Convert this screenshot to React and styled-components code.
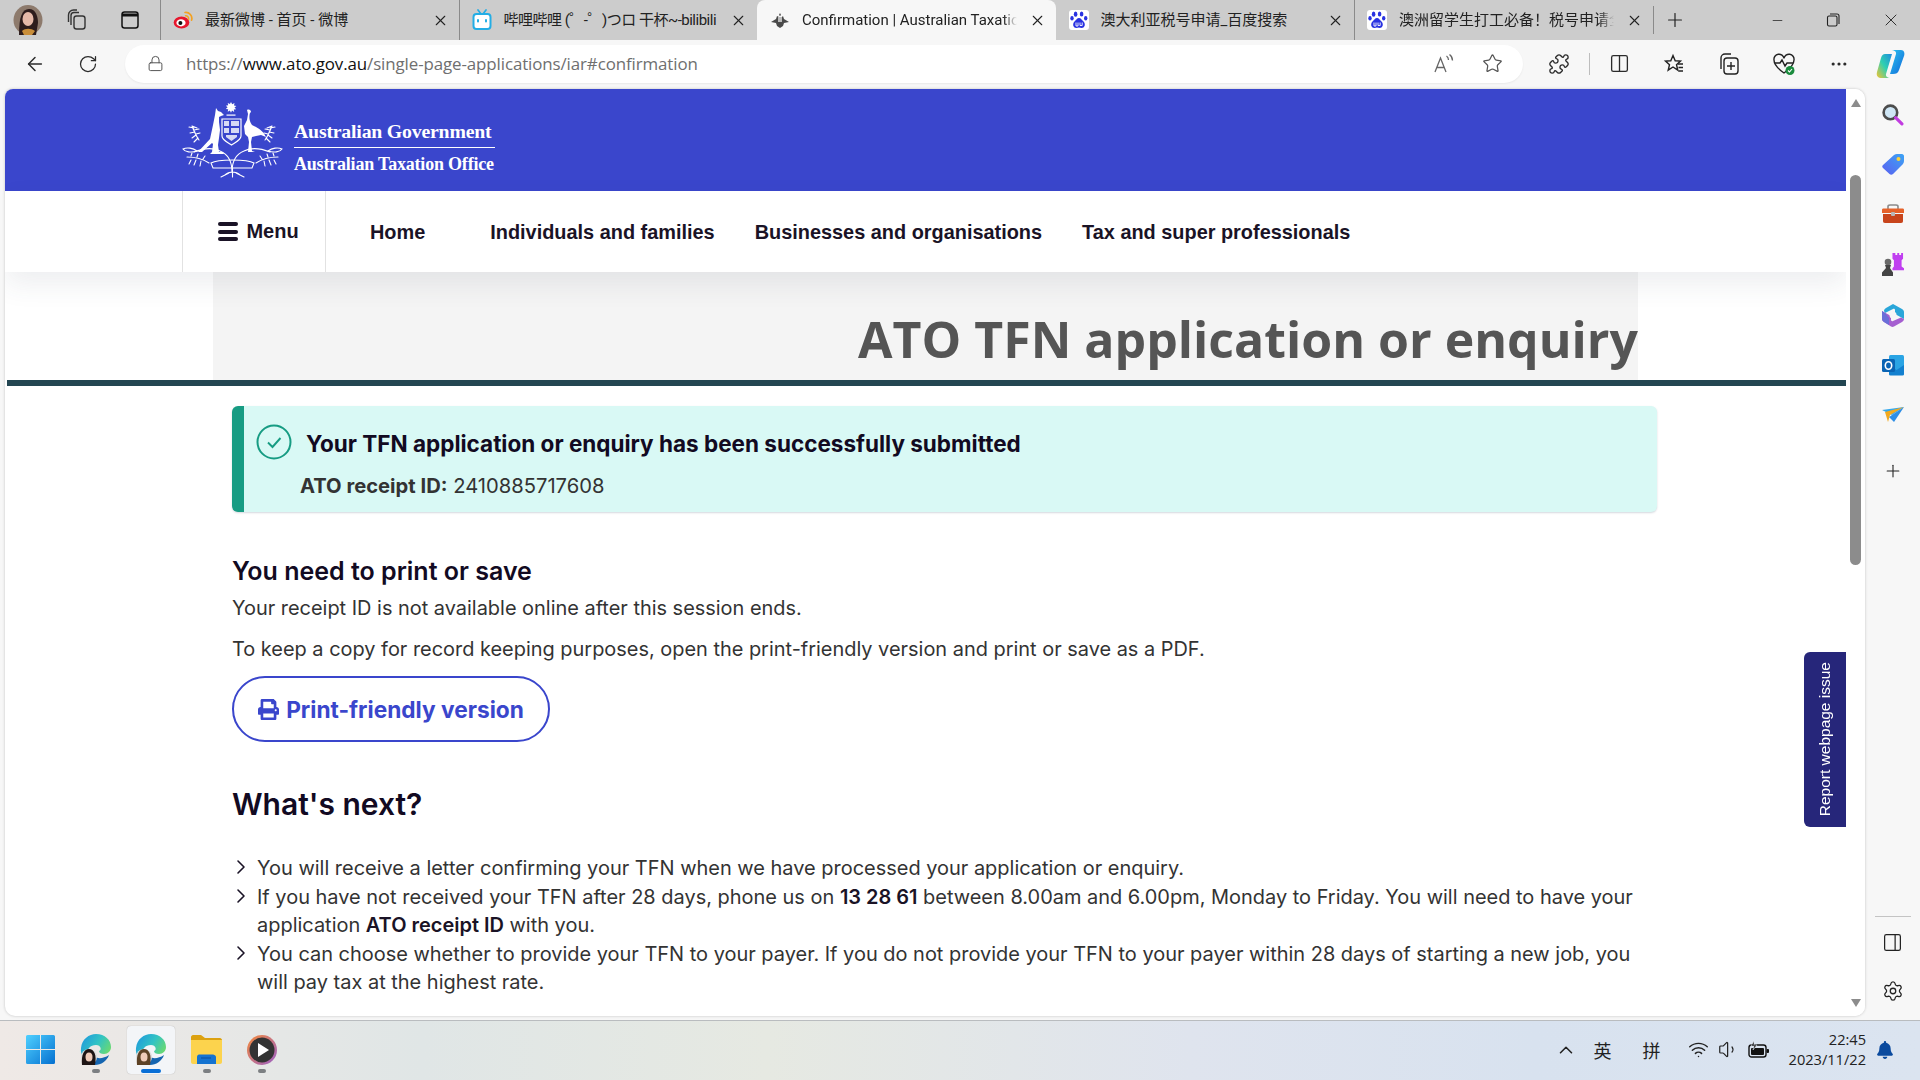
import React from 'react';
import styled, { createGlobalStyle } from 'styled-components';
import { FaPrint, FaBell } from 'react-icons/fa';
import {
  ArrowLeft, RotateCw, Lock, Star, Puzzle, Columns2, MoreHorizontal, Plus, Minus, X,
  ChevronRight, ChevronUp, Wifi, Settings, PanelRight, Volume1,
} from 'lucide-react';

const GlobalStyle = createGlobalStyle`
  html, body { margin: 0; padding: 0; background: #f7f7f7; overflow: hidden; }
  * { box-sizing: border-box; }
  body { font-family: Inter, "Liberation Sans", sans-serif; }
`;

const Screen = styled.div`
  width: 1920px;
  height: 1080px;
  display: flex;
  flex-direction: column;
  overflow: hidden;
  background: #f7f7f7;
`;

/* ---------- browser chrome ---------- */

const TabStrip = styled.div`
  height: 40px;
  flex: none;
  display: flex;
  align-items: stretch;
  background: #cccccc;
`;

const ProfileSlot = styled.div`
  width: 160px;
  flex: none;
  display: flex;
  align-items: center;
  padding-left: 13px;
`;

const StripIcon = styled.span`
  display: flex;
  color: #222;
  margin-right: ${p => p.$gap || 0}px;
`;

const Tab = styled.div`
  width: 298.5px;
  flex: none;
  display: flex;
  align-items: center;
  padding: 0 10px 0 12px;
  gap: 12px;
  position: relative;
  background: ${p => (p.$active ? '#f7f7f7' : 'transparent')};
  border-radius: ${p => (p.$active ? '8px 8px 0 0' : '0')};
  border-left: ${p => (p.$divider ? '1px solid #8a8a8a' : '1px solid transparent')};
  background-clip: ${p => (p.$divider ? 'padding-box' : 'border-box')};
`;

const TabFavicon = styled.span`
  width: 20px;
  height: 20px;
  flex: none;
  display: flex;
  align-items: center;
  justify-content: center;
`;

const TabTitle = styled.span`
  flex: 1;
  overflow: hidden;
  white-space: nowrap;
  font: 400 15px/20px Roboto, "Noto Sans CJK SC", sans-serif;
  letter-spacing: ${p => p.$tight || 0}px;
  color: #222;
  mask-image: ${p => (p.$fade ? 'linear-gradient(to left, transparent 0, #000 14px)' : 'none')};
`;

const StripPlus = styled.div`
  width: 44px;
  flex: none;
  display: flex;
  align-items: center;
  justify-content: center;
  border-left: 1px solid #8a8a8a;
  margin: 6px 0;
`;

const WindowButtons = styled.div`
  margin-left: auto;
  display: flex;
  align-items: center;
  gap: 41px;
  padding-right: 19px;
  color: #222;
`;

const Toolbar = styled.div`
  height: 49px;
  flex: none;
  display: flex;
  align-items: center;
  padding: 0 10px 2px 24px;
  background: #f7f7f7;
`;

const ToolButton = styled.span`
  display: flex;
  color: #2b2b2b;
  margin-right: ${p => p.$gap || 0}px;
`;

const AddressBar = styled.div`
  width: 1398px;
  height: 38px;
  flex: none;
  display: flex;
  align-items: center;
  background: #fff;
  border-radius: 19px;
  padding: 0 20px 0 22px;
  margin-right: 25px;
  box-shadow: 0 1px 2px rgba(0, 0, 0, .06);
`;

const Url = styled.span`
  margin-left: 22px;
  flex: 1;
  font: 400 16.9px "Open Sans", sans-serif;
  letter-spacing: -0.1px;
  color: #6f6f6f;
  white-space: nowrap;
  b { font-weight: 400; color: #111; }
`;

const ToolDivider = styled.span`
  width: 1px;
  height: 22px;
  background: #bdbdbd;
  margin: 0 19px;
`;

/* ---------- middle area ---------- */

const Middle = styled.div`
  height: 927px;
  flex: none;
  display: flex;
  padding-left: 5px;
`;

const PageCard = styled.div`
  width: 1860px;
  flex: none;
  display: flex;
  background: #fff;
  border-radius: 8px 10px 10px 10px;
  overflow: hidden;
  box-shadow: 0 0 3px rgba(0, 0, 0, .22);
`;

const Page = styled.div`
  width: 1841px;
  flex: none;
  position: relative;
  overflow: hidden;
`;

const Header = styled.header`
  height: 102px;
  background: #3a46cc;
  display: flex;
  align-items: center;
  padding-left: 176px;
  gap: 10px;
`;

const LogoText = styled.div`
  width: 201px;
  display: flex;
  flex-direction: column;
  color: #fff;
  font-family: "Liberation Serif", serif;
  font-weight: 700;
  line-height: 1;
  white-space: nowrap;
  margin-top: 15px;
`;

const LogoLine = styled.span`
  font-size: ${p => (p.$top ? 19.8 : 18)}px;
  letter-spacing: -0.2px;
  padding-bottom: ${p => (p.$top ? 6 : 0)}px;
  padding-top: ${p => (p.$top ? 0 : 7)}px;
  border-bottom: ${p => (p.$top ? '1px solid #fff' : '0')};
`;

const Nav = styled.nav`
  height: 81px;
  position: relative;
  z-index: 2;
  background: #fff;
  display: flex;
  align-items: center;
  padding-left: 177px;
  box-shadow: 0 12px 28px rgba(60, 65, 85, .09);
`;

const MenuCell = styled.div`
  width: 144px;
  height: 100%;
  display: flex;
  align-items: center;
  justify-content: center;
  gap: 8px;
  border-left: 1px solid #e2e2e2;
  border-right: 1px solid #e2e2e2;
  margin-right: 44px;
  padding-left: 9px;
  font: 700 20px "Liberation Sans", sans-serif;
  color: #1a1326;
`;

const Burger = styled.span`
  width: 20px;
  height: 19px;
  display: flex;
  flex-direction: column;
  justify-content: space-between;
  i {
    display: block;
    height: 4px;
    border-radius: 2px;
    background: #1a1326;
  }
`;

const NavItem = styled.a`
  font: 700 19.9px "Liberation Sans", sans-serif;
  color: #1a1326;
  margin-right: ${p => p.$gap}px;
  margin-top: 2px;
  white-space: nowrap;
`;

const TitleBand = styled.div`
  height: 108px;
  margin-left: 208px;
  width: 1425px;
  padding-top: 26px;
  background: #f4f4f4;
  display: flex;
  align-items: center;
  justify-content: flex-end;
`;

const PageTitle = styled.h1`
  margin: 0;
  font: 700 50px "Open Sans", sans-serif;
  color: #555;
  white-space: nowrap;
`;

const TitleRule = styled.div`
  height: 6px;
  margin-left: 2px;
  background: #234652;
`;

const Content = styled.main`
  width: 1425px;
  margin-left: 227px;
  padding-top: 20px;
  color: #1a1326;
`;

const Alert = styled.div`
  height: 106px;
  display: flex;
  flex-direction: column;
  background: #d9f9f5;
  border-left: 12px solid #179c83;
  border-radius: 6px;
  box-shadow: 0 1px 2px rgba(40, 60, 90, .2);
  padding: 18px 0 0 12px;
`;

const AlertHead = styled.div`
  display: flex;
  align-items: center;
  gap: 14px;
  height: 36px;
`;

const AlertTitle = styled.strong`
  font: 700 22.5px Inter, sans-serif;
  color: #120a22;
  margin-top: 2px;
`;

const AlertReceipt = styled.div`
  margin: 13px 0 0 44px;
  font: 400 20.2px Inter, sans-serif;
  color: #333;
  b { font-weight: 700; }
`;

const SubHead = styled.h3`
  margin: 43px 0 0;
  font: 600 25px/32px Inter, sans-serif;
  color: #120a22;
`;

const Para = styled.p`
  margin: ${p => p.$top}px 0 0;
  font: 400 19.93px/28px Inter, sans-serif;
  color: #333;
`;

const PrintButton = styled.a`
  margin-top: 13px;
  width: 318px;
  height: 66px;
  display: flex;
  align-items: center;
  justify-content: center;
  gap: 7px;
  border: 2px solid #3a46cc;
  border-radius: 33px;
  font: 700 22.7px Inter, sans-serif;
  color: #3a46cc;
`;

const NextHead = styled.h2`
  margin: 43px 0 0;
  font: 600 30px/38px Inter, sans-serif;
  color: #120a22;
`;

const NextList = styled.ul`
  list-style: none;
  margin: 31px 0 0;
  padding: 0;
`;

const NextItem = styled.li`
  display: flex;
  font: 400 19.97px/28.5px Inter, sans-serif;
  color: #333;
  b { font-weight: 600; color: #1a1326; }
  svg { flex: none; margin: 1px 0 0 -3px; color: #1a1326; }
  span { margin-left: 4px; }
`;

const ReportTab = styled.a`
  position: absolute;
  right: 0;
  top: 563px;
  width: 42px;
  height: 175px;
  display: flex;
  align-items: center;
  justify-content: center;
  background: #26267a;
  border-radius: 6px 0 0 6px;
  color: #fff;
  font: 400 15.5px "Liberation Sans", sans-serif;
  span {
    writing-mode: vertical-rl;
    transform: rotate(180deg);
    white-space: nowrap;
  }
`;

const Scrollbar = styled.div`
  width: 19px;
  flex: none;
  display: flex;
  flex-direction: column;
  align-items: center;
  padding: 10px 0 9px 0;
  background: #fff;
`;

const ScrollArrow = styled.span`
  width: 0;
  height: 0;
  flex: none;
  border-left: 5.5px solid transparent;
  border-right: 5.5px solid transparent;
  border-bottom: ${p => (p.$down ? '0' : '8px solid #8c8c8c')};
  border-top: ${p => (p.$down ? '8px solid #8c8c8c' : '0')};
`;

const ScrollTrack = styled.div`
  flex: 1;
  width: 11px;
  margin-top: 68px;
`;

const ScrollThumb = styled.div`
  height: 390px;
  background: #8c8c8c;
  border-radius: 6px;
`;

const SideBar = styled.aside`
  flex: 1;
  display: flex;
  flex-direction: column;
  align-items: center;
  position: relative;
`;

const SideIcon = styled.span`
  height: 50.2px;
  flex: none;
  display: flex;
  align-items: center;
  justify-content: center;
  color: #222;
  margin-top: ${p => p.$gap || 0}px;
`;

const SideBottom = styled.div`
  margin-top: auto;
  width: 36px;
  border-top: 1px solid #c4c4c4;
  padding: 15px 0 14px;
  display: flex;
  flex-direction: column;
  align-items: center;
  gap: 27px;
  color: #222;
`;

/* ---------- taskbar ---------- */

const TaskBar = styled.footer`
  margin-top: 4px;
  height: 60px;
  flex: none;
  display: flex;
  align-items: center;
  padding-bottom: 2px;
  border-top: 1px solid #b9bcbf;
  background: linear-gradient(90deg, #efe9e6 0%, #e0e6e6 22%, #e6e9e2 40%, #dfe4ee 62%, #d8e2ef 80%, #dbe4f0 100%);
`;

const TaskIcons = styled.div`
  display: flex;
  align-items: center;
  padding-left: 16px;
  gap: 7.500px;
`;

const TaskSlot = styled.div`
  width: 48px;
  height: 48px;
  position: relative;
  display: flex;
  align-items: center;
  justify-content: center;
  border-radius: 4px;
  background: ${p => (p.$active ? '#f3f5f8' : 'transparent')};
  box-shadow: ${p => (p.$active ? '0 0 1px rgba(0,0,0,.3)' : 'none')};
  &::after {
    content: '';
    display: ${p => (p.$dot ? 'block' : 'none')};
    position: absolute;
    bottom: 1px;
    left: 50%;
    transform: translateX(-50%);
    height: 4px;
    border-radius: 2px;
    width: ${p => (p.$active ? 20 : 8)}px;
    background: ${p => (p.$active ? '#0a6fd6' : '#7c7f82')};
  }
`;

const Tray = styled.div`
  margin-left: auto;
  display: flex;
  align-items: center;
  color: #222;
`;

const TrayGlyph = styled.span`
  font: 400 18px "Noto Sans CJK SC", sans-serif;
  margin-left: ${p => p.$gap}px;
`;

const TrayIcon = styled.span`
  display: flex;
  margin-left: ${p => p.$gap}px;
  margin-right: ${p => p.$right || 0}px;
`;

const Clock = styled.div`
  margin-left: 19px;
  margin-top: -2px;
  text-align: right;
  font: 400 14.6px/20px "Open Sans", sans-serif;
  color: #222;
`;

/* ---------- drawings ---------- */

const Avatar = () => (
  <svg width="30" height="30" viewBox="0 0 30 30">
    <ellipse cx="15" cy="15" rx="14.500" ry="15" fill="#8d7a6c" />
    <path d="M6 30c0-18 3-26 10-26s9 8 9 14l-2 12z" fill="#2d1c1c" />
    <ellipse cx="15" cy="14" rx="5.500" ry="7" fill="#e5b9a8" />
    <path d="M9 26c3-3 9-3 13 0l-3 4h-8z" fill="#c98e3a" />
  </svg>
);

const Collections = () => (
  <svg width="22" height="22" viewBox="0 0 22 22" fill="none" stroke="#333" strokeWidth="1.400">
    <rect x="8" y="7" width="11" height="13" rx="2.500" />
    <path d="M5 16V6.500A3 3 0 0 1 8 3.500h5" />
    <path d="M2.500 13V6A5 5 0 0 1 7.500 1h3.500" />
  </svg>
);

const TabActions = () => (
  <svg width="20" height="20" viewBox="0 0 20 20" fill="none" stroke="#111" strokeWidth="1.500">
    <rect x="2" y="2" width="16" height="16" rx="2.500" />
    <path d="M2 5h16" strokeWidth="3" />
  </svg>
);

const Weibo = () => (
  <svg width="20" height="20" viewBox="0 0 20 20">
    <ellipse cx="8.500" cy="12.500" rx="7.800" ry="6" fill="#e6162d" />
    <ellipse cx="8" cy="12.800" rx="4.600" ry="3.600" fill="#fff" />
    <circle cx="7.400" cy="13" r="2" fill="#111" />
    <path d="M12 2.500a6 6 0 0 1 6.600 7.600" fill="none" stroke="#f4a11f" strokeWidth="1.700" strokeLinecap="round" />
    <path d="M12.500 5.700a3 3 0 0 1 3.100 3.600" fill="none" stroke="#f4a11f" strokeWidth="1.500" strokeLinecap="round" />
  </svg>
);

const Bili = () => (
  <svg width="20" height="22" viewBox="0 0 20 22">
    <path d="M6 1l3 4M14 1l-3 4" stroke="#23ade5" strokeWidth="1.700" strokeLinecap="round" />
    <rect x="1.500" y="5" width="17" height="15" rx="3" fill="#fff" stroke="#23ade5" strokeWidth="2" />
    <rect x="5" y="10" width="2" height="3.500" rx="1" fill="#23ade5" />
    <rect x="13" y="10" width="2" height="3.500" rx="1" fill="#23ade5" />
  </svg>
);

const AtoFav = () => (
  <svg width="20" height="16" viewBox="0 0 20 16" fill="#4a4a4a">
    <path d="M10 1l1 2-1 1-1-1zM1 10l5-3 1-3 2 1h3l1-1 1 3 5 3-5 1-1 3-3 2-3-2-1-3z" />
    <rect x="8" y="5" width="4" height="5" fill="#bbb" />
  </svg>
);

const Baidu = () => (
  <svg width="20" height="20" viewBox="0 0 20 20">
    <rect width="20" height="20" rx="3" fill="#fff" />
    <g fill="#2932e1">
      <ellipse cx="6.600" cy="4.200" rx="1.800" ry="2.600" />
      <ellipse cx="12.600" cy="4" rx="1.800" ry="2.600" />
      <ellipse cx="3" cy="8.300" rx="1.700" ry="2.300" />
      <ellipse cx="16.700" cy="8.300" rx="1.700" ry="2.300" />
      <path d="M10 8c2 0 2.700 2 4.500 3.600 2 1.800 2 6.400-2 6.400-1 0-1.500-.4-2.500-.4s-1.500.4-2.500.4c-4 0-4-4.600-2-6.400C7.300 10 8 8 10 8z" />
    </g>
    <path d="M7 12.500v3.500h2v-3.500M11 12.500v3h2.200v-3" fill="none" stroke="#fff" strokeWidth=".9" />
  </svg>
);

const ReadAloud = () => (
  <svg width="22" height="22" viewBox="0 0 22 22" fill="none" stroke="#666" strokeWidth="1.300">
    <path d="M2 19l5.500-14L13 19M4 14.500h7" />
    <path d="M13.500 3c1.500 1 2 2.500 2 4M16.500 1.500c2 1.500 3 3.500 3 6" />
  </svg>
);

const Favourites = () => (
  <svg width="22" height="22" viewBox="0 0 22 22" fill="none" stroke="#222" strokeWidth="1.400">
    <path d="M10 2.500l2.200 5.300 5.300.3-4 3.600 1.300 5.500L10 14l-4.800 3.200 1.300-5.500-4-3.600 5.300-.3z" />
    <path d="M15 11h5M15.500 14.500h4.500M15.500 18h4.500" />
  </svg>
);

const CollectionsAdd = () => (
  <svg width="24" height="24" viewBox="0 0 24 24" fill="none" stroke="#222" strokeWidth="1.400">
    <rect x="7" y="6" width="14" height="16" rx="3" />
    <path d="M4 17V6a4 4 0 0 1 4-4h6" />
    <path d="M14 10v8M10 14h8" />
  </svg>
);

const Heartbeat = () => (
  <svg width="24" height="24" viewBox="0 0 24 24" fill="none">
    <path d="M12 21C5 16 2 12 2 8a5 5 0 0 1 10-1.500A5 5 0 0 1 22 8c0 4-3 8-10 13z" stroke="#222" strokeWidth="1.400" />
    <path d="M3 11h5l2-3 3 6 2-3h6" stroke="#222" strokeWidth="1.400" />
    <circle cx="18" cy="18.500" r="4.500" fill="#1b8c3e" />
    <path d="M16 18.500l1.500 1.500 2.500-3" stroke="#fff" strokeWidth="1.100" />
  </svg>
);

const Copilot = () => (
  <svg width="30" height="32" viewBox="0 0 30 32">
    <defs>
      <linearGradient id="cpa" x1="0" y1="0" x2="1" y2="1">
        <stop offset="0" stopColor="#2bc4f0" />
        <stop offset="1" stopColor="#1167d8" />
      </linearGradient>
      <linearGradient id="cpb" x1="0" y1="1" x2="1" y2="0">
        <stop offset="0" stopColor="#f4c430" />
        <stop offset=".5" stopColor="#2fd0b0" />
        <stop offset="1" stopColor="#1e8be0" />
      </linearGradient>
    </defs>
    <path d="M14 2h11c3 0 4 3 3 6l-5 14c-1 3-3 4-6 4h-3l6-20c.5-2-1-4-6-4z" fill="url(#cpa)" />
    <path d="M9 6h7l-6 20c-.5 2 1 4 5 4H6c-4 0-6-2-5-6L5 10c1-3 2-4 4-4z" fill="url(#cpb)" />
  </svg>
);

const Arms = () => (
  <svg width="103" height="76" viewBox="0 0 103 76" fill="#fff">
    {/* star */}
    <path d="M50 0l1.200 2.200 2.300-1.100-.5 2.400 2.400.4-1.900 1.600 1.700 1.700-2.400.3.400 2.400-2.200-1.300L50 10.800l-1.100-2.200-2.200 1.100.5-2.400-2.400-.3 1.800-1.700-1.800-1.600 2.400-.4-.5-2.400 2.200 1.200z" />
    <rect x="45.500" y="12.500" width="9" height="1.200" />
    {/* kangaroo */}
    <path d="M35 6l2 3 3 1 3 3-3 1-2 1v5l1 8-1 8-1 7 1 7h4l1 2H29l2-2 1-8-1-1-10 9h-4l-1 1 13-14 3-14 2-10z" />
    {/* emu */}
    <path d="M66 8c2-1 4 0 4 2l-1 1c-1 3-1 8 2 12 4 2 11 5 14 12l-5-2-5 1-4 1-1 5 1 9 3 1h-7l1-10-1-5-3-3-1-8 3-6 1-6z" />
    {/* shield */}
    <path d="M41 17h19v17c0 4-5 6-9.500 9-4.500-3-9.500-5-9.500-9z" fill="#3a46cc" stroke="#fff" strokeWidth="1.200" />
    <path d="M43 19h5v5h-5zM50 19h8v5h-8zM43 26h5v5h-5zM50 26h8v5h-8zM45 33h11v2l-5.500 4-5.500-4z" opacity=".8" />
    {/* wattle branches */}
    <g fill="none" stroke="#fff" strokeWidth="1.100" strokeLinecap="round">
      <path d="M51 70c0-9-2-17-12-21-6-3-16-3-26 1M51 70c0-9 2-17 12-21 6-3 16-3 26 1" />
      <path d="M2 47c2 3 8 4 14 2-4-3-10-4-14-2zM101 47c-2 3-8 4-14 2 4-3 10-4 14-2z" />
      <path d="M11 24c2 5 4 10 7 14M13 26l-5-1M14 30l-5 1M15 33l-4 3M17 36l-4 4M11 24l5 2M13 28l5-1M15 32l4-1" />
      <path d="M91 24c-2 5-4 10-7 14M89 26l5-1M88 30l5 1M87 33l4 3M85 36l4 4M91 24l-5 2M89 28l-5-1M87 32l-4-1" />
      <path d="M6 55c8 0 16 2 22 6M10 58l-2 4M15 58l-2 5M20 59l-1 5M10 54l1-3M16 55l1-3M22 57l2-3" />
      <path d="M97 55c-8 0-16 2-22 6M93 58l2 4M88 58l2 5M83 59l1 5M93 54l-1-3M87 55l-1-3M81 57l-2-3" />
      <path d="M30 61c7-4 36-4 43 0l-2 5H32z" />
      <path d="M44 73c4-4 11-4 15 0M40 75l8-4M63 75l-8-4M51.500 66v9" />
    </g>
  </svg>
);

const CheckRing = () => (
  <svg width="36" height="36" viewBox="0 0 36 36" fill="none" stroke="#179c83">
    <circle cx="18" cy="18" r="16.500" strokeWidth="2" />
    <path d="M12 18.500l4.500 4.500 8-9" strokeWidth="1.900" />
  </svg>
);

const SearchIcon = () => (
  <svg width="23" height="23" viewBox="0 0 22 22">
    <circle cx="9" cy="9" r="6.500" fill="#cfe6f5" stroke="#4c4c4c" strokeWidth="2.500" />
    <path d="M14 14l6 6" stroke="#c13ce0" strokeWidth="3" strokeLinecap="round" />
  </svg>
);

const TagIcon = () => (
  <svg width="22" height="22" viewBox="0 0 22 22">
    <defs>
      <linearGradient id="tg" x1="0" y1="1" x2="1" y2="0">
        <stop offset="0" stopColor="#5a5ff0" />
        <stop offset="1" stopColor="#3da4f5" />
      </linearGradient>
    </defs>
    <path d="M1 12L12 2c1-.8 2-1 3-1h5c1 0 2 1 2 2v5c0 1-.3 2-1 3L11 21c-1 1-2.500 1-3.500 0L1 15c-1-1-1-2 0-3z" fill="url(#tg)" />
    <circle cx="16.500" cy="6" r="2" fill="#fbd23c" />
  </svg>
);

const ToolboxIcon = () => (
  <svg width="24" height="20" viewBox="0 0 24 20">
    <path d="M7 5V2.500C7 1.500 8 1 9 1h6c1 0 2 .5 2 1.500V5" fill="none" stroke="#8a8a8a" strokeWidth="1.600" />
    <path d="M1 6c0-1 .5-1.500 1.500-1.500h19c1 0 1.500.5 1.500 1.500v3H1z" fill="#e5622a" />
    <path d="M2 10h20v7c0 1-.5 2-2 2H4c-1.500 0-2-1-2-2z" fill="#c8451c" />
    <rect x="10" y="8" width="4" height="4" rx="1" fill="#b8b8b8" />
  </svg>
);

const ChessIcon = () => (
  <svg width="24" height="24" viewBox="0 0 24 24">
    <path d="M14 1h2v2h2V1h2v2h2V1h2v6l-1.500 1.500V15L25 17v2H13v-2l1.500-2V8.500L13 7V1z" fill="#c03ff0" transform="translate(-1 -1) scale(.96)" />
    <circle cx="7" cy="9" r="3.300" fill="#6a6a6a" />
    <path d="M4 12h6l-1 3 3 4.500V23H1v-3.500L5 15z" fill="#444" />
  </svg>
);

const M365Icon = () => (
  <svg width="22" height="24" viewBox="0 0 22 24">
    <path d="M11 1l9 5c1.500 1 2 2 2 3v7L13 11V7c0-1-1-1.500-2-1L3 10 2 8c0-1 .5-2 2-3z" fill="#2aa6d9" />
    <path d="M0 8l9 5v4c0 1 1 1.500 2 1l8-3.500 3 1.500c0 1-.5 2-2 3l-8 4.500c-1 .5-2 .5-3 0L2 19c-1.500-1-2-2-2-3z" fill="#a55fd0" />
    <circle cx="11" cy="12" r="3.500" fill="#f6f6f6" />
    <path d="M0 8v8c0 1 .5 2 2 3l5 3V15L3 10z" fill="#6a6fd8" />
  </svg>
);

const OutlookIcon = () => (
  <svg width="22" height="22" viewBox="0 0 22 22">
    <rect x="7" y="1" width="15" height="20" rx="1.500" fill="#2aa4e4" />
    <path d="M7 11l7.500 5 7.500-5v9a1.500 1.500 0 0 1-1.500 1.500H8.500A1.500 1.500 0 0 1 7 20z" fill="#1380cf" />
    <rect x="0" y="5" width="13" height="13" rx="1.500" fill="#0a64b4" />
    <ellipse cx="6.500" cy="11.500" rx="3.200" ry="3.700" fill="none" stroke="#fff" strokeWidth="1.600" />
  </svg>
);

const SendIcon = () => (
  <svg width="22" height="16" viewBox="0 0 22 16">
    <path d="M0 3L22 0 10 8z" fill="#34a8ec" />
    <path d="M22 0L8 8 6 15 3 5z" fill="#f2a91e" />
    <path d="M22 0L12 15l-5-5z" fill="#2e8ee6" />
  </svg>
);

const WinLogo = () => (
  <svg width="29" height="29" viewBox="0 0 29 29">
    <defs>
      <linearGradient id="wl" x1="0" y1="0" x2="1" y2="1">
        <stop offset="0" stopColor="#4fd0ff" />
        <stop offset="1" stopColor="#0570d0" />
      </linearGradient>
    </defs>
    <path d="M1.500 0H14v14H0V1.500A1.500 1.500 0 0 1 1.500 0zM15 0h12.500A1.500 1.500 0 0 1 29 1.500V14H15zM0 15h14v14H1.500A1.500 1.500 0 0 1 0 27.500zM15 15h14v12.500a1.500 1.500 0 0 1-1.500 1.500H15z" fill="url(#wl)" />
  </svg>
);

const EdgeProfile = ({ id, hair }) => (
  <svg width="32" height="32" viewBox="0 0 32 32">
    <defs>
      <linearGradient id={`e${id}`} x1="0" y1="0" x2="1" y2=".6">
        <stop offset="0" stopColor="#1c94e0" />
        <stop offset=".55" stopColor="#32c3c4" />
        <stop offset="1" stopColor="#6edb6a" />
      </linearGradient>
    </defs>
    <path d="M1 14C2 5 9 0 16 0c9 0 15 6 15 13 0 4-3 7-7 7-3 0-5-1-5-3 3-1 2-6-3-6-6 0-9 4-9 9 0 3 1 6 3 8C5 27 0 21 1 14z" fill={`url(#e${id})`} />
    <path d="M14 22c3 3 9 3 15-1-2 6-8 10-14 10-2 0-3-.5-4-1 2-1 3-4 3-8z" fill="#1565b0" />
    <circle cx="9" cy="23" r="8" fill="#ddd" />
    <path d="M2 31c-1-10 2-16 7-16s8 6 6 16z" fill={hair} />
    <ellipse cx="9" cy="23" rx="3.500" ry="4.500" fill="#efcbb9" />
  </svg>
);

const Folder = () => (
  <svg width="31" height="29" viewBox="0 0 31 29">
    <path d="M0 2c0-1 1-2 2-2h8l4 3h15c1 0 2 1 2 2v3H0z" fill="#dca10f" />
    <path d="M0 5h31v22c0 1-1 2-2 2H2c-1 0-2-1-2-2z" fill="#fcd34d" />
    <path d="M6 22c0-1.500 1-2.500 2-2.500h14c1 0 3 1 3 2.500v7H6z" fill="#1473d0" />
    <rect x="10" y="22.500" width="10" height="1" fill="#0a4d99" />
  </svg>
);

const Player = () => (
  <svg width="30" height="30" viewBox="0 0 30 30">
    <defs>
      <linearGradient id="pl" x1="0" y1="0" x2="1" y2="1">
        <stop offset="0" stopColor="#f58a3a" />
        <stop offset="1" stopColor="#9a5fc8" />
      </linearGradient>
    </defs>
    <circle cx="15" cy="15" r="15" fill="url(#pl)" />
    <circle cx="15" cy="15" r="12.500" fill="#333" />
    <path d="M11 8l11 7-11 7z" fill="#fff" />
  </svg>
);

const Battery = () => (
  <svg width="22" height="18" viewBox="0 0 22 18">
    <rect x="1" y="4" width="17" height="12" rx="2.500" fill="none" stroke="#111" strokeWidth="1.400" />
    <rect x="3" y="7" width="13" height="7" rx="1" fill="#111" />
    <rect x="18.500" y="8" width="2.500" height="4" rx="1" fill="#111" />
    <path d="M6 0L3 5h3l-1 4 4-5H6z" fill="#111" stroke="#dfe6f0" strokeWidth=".6" />
  </svg>
);

const Restore = () => (
  <svg width="14" height="14" viewBox="0 0 14 14" fill="none" stroke="#222" strokeWidth="1.100">
    <rect x="1.500" y="3" width="9.500" height="10" rx="1.500" />
    <path d="M4 1h7c1.500 0 2 .5 2 2v8" />
  </svg>
);

/* ---------- data ---------- */

const tabs = [
  { title: '最新微博 - 首页 - 微博', icon: <Weibo />, divider: true },
  { title: '哔哩哔哩 (゜-゜)つロ 干杯~-bilibili', icon: <Bili />, divider: true, tight: -0.5 },
  { title: 'Confirmation | Australian Taxation Office', icon: <AtoFav />, active: true, fade: true },
  { title: '澳大利亚税号申请_百度搜索', icon: <Baidu /> },
  { title: '澳洲留学生打工必备！税号申请全攻略', icon: <Baidu />, divider: true, fade: true },
];

const sideIcons = [
  <SearchIcon />, <TagIcon />, <ToolboxIcon />, <ChessIcon />, <M365Icon />, <OutlookIcon />, <SendIcon />,
];

const App = () => (
  <Screen>
    <GlobalStyle />
    <TabStrip>
      <ProfileSlot>
        <StripIcon $gap={23}><Avatar /></StripIcon>
        <StripIcon $gap={32}><Collections /></StripIcon>
        <StripIcon><TabActions /></StripIcon>
      </ProfileSlot>
      {tabs.map(tab => (
        <Tab key={tab.title} $active={tab.active} $divider={tab.divider}>
          <TabFavicon>{tab.icon}</TabFavicon>
          <TabTitle $fade={tab.fade} $tight={tab.tight}>{tab.title}</TabTitle>
          <X size={17} strokeWidth={1.5} color="#222" />
        </Tab>
      ))}
      <StripPlus><Plus size={22} strokeWidth={1.3} color="#222" /></StripPlus>
      <WindowButtons>
        <Minus size={15} strokeWidth={1.2} />
        <Restore />
        <X size={20} strokeWidth={1.1} />
      </WindowButtons>
    </TabStrip>

    <Toolbar>
      <ToolButton $gap={32}><ArrowLeft size={22} strokeWidth={1.6} /></ToolButton>
      <ToolButton $gap={27}><RotateCw size={20} strokeWidth={1.5} /></ToolButton>
      <AddressBar>
        <Lock size={17} strokeWidth={1.4} color="#555" />
        <Url>https://<b>www.ato.gov.au</b>/single-page-applications/iar#confirmation</Url>
        <ToolButton $gap={27}><ReadAloud /></ToolButton>
        <ToolButton><Star size={21} strokeWidth={1.4} color="#555" /></ToolButton>
      </AddressBar>
      <ToolButton><Puzzle size={22} strokeWidth={1.5} /></ToolButton>
      <ToolDivider />
      <ToolButton $gap={33}><Columns2 size={21} strokeWidth={1.5} /></ToolButton>
      <ToolButton $gap={32}><Favourites /></ToolButton>
      <ToolButton $gap={31}><CollectionsAdd /></ToolButton>
      <ToolButton $gap={33}><Heartbeat /></ToolButton>
      <ToolButton $gap={27}><MoreHorizontal size={20} strokeWidth={1.8} /></ToolButton>
      <ToolButton><Copilot /></ToolButton>
    </Toolbar>

    <Middle>
      <PageCard>
        <Page>
          <Header>
            <Arms />
            <LogoText>
              <LogoLine $top>Australian Government</LogoLine>
              <LogoLine>Australian Taxation Office</LogoLine>
            </LogoText>
          </Header>
          <Nav>
            <MenuCell>
              <Burger><i /><i /><i /></Burger>
              Menu
            </MenuCell>
            <NavItem $gap={65}>Home</NavItem>
            <NavItem $gap={40}>Individuals and families</NavItem>
            <NavItem $gap={40}>Businesses and organisations</NavItem>
            <NavItem $gap={0}>Tax and super professionals</NavItem>
          </Nav>
          <TitleBand>
            <PageTitle>ATO TFN application or enquiry</PageTitle>
          </TitleBand>
          <TitleRule />
          <Content>
            <Alert>
              <AlertHead>
                <CheckRing />
                <AlertTitle>Your TFN application or enquiry has been successfully submitted</AlertTitle>
              </AlertHead>
              <AlertReceipt><b>ATO receipt ID:</b> 2410885717608</AlertReceipt>
            </Alert>
            <SubHead>You need to print or save</SubHead>
            <Para $top={7}>Your receipt ID is not available online after this session ends.</Para>
            <Para $top={13}>To keep a copy for record keeping purposes, open the print-friendly version and print or save as a PDF.</Para>
            <PrintButton>
              <FaPrint size={21} />
              Print-friendly version
            </PrintButton>
            <NextHead>What's next?</NextHead>
            <NextList>
              <NextItem>
                <ChevronRight size={24} strokeWidth={1.6} />
                <span>You will receive a letter confirming your TFN when we have processed your application or enquiry.</span>
              </NextItem>
              <NextItem>
                <ChevronRight size={24} strokeWidth={1.6} />
                <span>If you have not received your TFN after 28 days, phone us on <b>13 28 61</b> between 8.00am and 6.00pm, Monday to Friday. You will need to have your application <b>ATO receipt ID</b> with you.</span>
              </NextItem>
              <NextItem>
                <ChevronRight size={24} strokeWidth={1.6} />
                <span>You can choose whether to provide your TFN to your payer. If you do not provide your TFN to your payer within 28 days of starting a new job, you will pay tax at the highest rate.</span>
              </NextItem>
            </NextList>
          </Content>
          <ReportTab><span>Report webpage issue</span></ReportTab>
        </Page>
        <Scrollbar>
          <ScrollArrow />
          <ScrollTrack><ScrollThumb /></ScrollTrack>
          <ScrollArrow $down />
        </Scrollbar>
      </PageCard>
      <SideBar>
        {sideIcons.map((icon, i) => <SideIcon key={i}>{icon}</SideIcon>)}
        <SideIcon $gap={6}><Plus size={20} strokeWidth={1.3} /></SideIcon>
        <SideBottom>
          <PanelRight size={21} strokeWidth={1.4} />
          <Settings size={22} strokeWidth={1.4} />
        </SideBottom>
      </SideBar>
    </Middle>

    <TaskBar>
      <TaskIcons>
        <TaskSlot><WinLogo /></TaskSlot>
        <TaskSlot $dot><EdgeProfile id="a" hair="#1d1414" /></TaskSlot>
        <TaskSlot $dot $active><EdgeProfile id="b" hair="#5d4226" /></TaskSlot>
        <TaskSlot $dot><Folder /></TaskSlot>
        <TaskSlot $dot><Player /></TaskSlot>
      </TaskIcons>
      <Tray>
        <TrayIcon $gap={0}><ChevronUp size={22} strokeWidth={1.7} /></TrayIcon>
        <TrayGlyph $gap={17}>英</TrayGlyph>
        <TrayGlyph $gap={31}>拼</TrayGlyph>
        <TrayIcon $gap={27}><Wifi size={21} strokeWidth={1.7} /></TrayIcon>
        <TrayIcon $gap={9}><Volume1 size={21} strokeWidth={1.4} /></TrayIcon>
        <TrayIcon $gap={9}><Battery /></TrayIcon>
        <Clock>22:45<br />2023/11/22</Clock>
        <TrayIcon $gap={10} $right={26}><FaBell size={18} color="#0a4a9e" /></TrayIcon>
      </Tray>
    </TaskBar>
  </Screen>
);

export default App;
